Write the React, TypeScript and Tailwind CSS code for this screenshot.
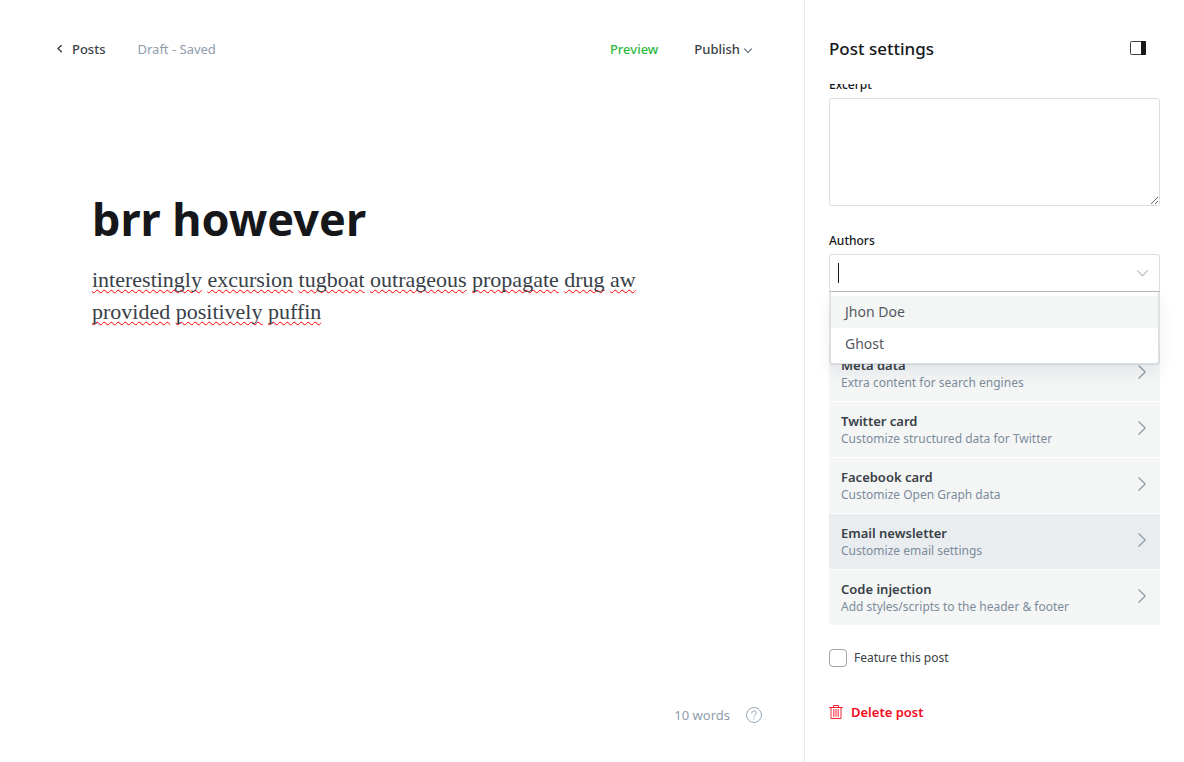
import { useState } from 'react';

const sections = [
  { title: 'Meta data', note: 'Extra content for search engines' },
  { title: 'Twitter card', note: 'Customize structured data for Twitter' },
  { title: 'Facebook card', note: 'Customize Open Graph data' },
  { title: 'Email newsletter', note: 'Customize email settings', active: true },
  { title: 'Code injection', note: 'Add styles/scripts to the header & footer' },
];

const firstLine = ['interestingly', 'excursion', 'tugboat', 'outrageous', 'propagate', 'drug', 'aw'];
const secondLine = ['provided', 'positively', 'puffin'];

function Words({ words }: { words: string[] }) {
  return (
    <>
      {words.map((word) => (
        <span key={word}>
          <span className="underline decoration-[#ff0000] decoration-wavy decoration-1 underline-offset-2 [text-decoration-skip-ink:none]">
            {word}
          </span>{' '}
        </span>
      ))}
    </>
  );
}

function ChevronRight() {
  return (
    <svg viewBox="0 0 8 14" className="mb-1 h-3.5 w-2 shrink-0" fill="none" stroke="#8e9ba8" strokeWidth="1.2" strokeLinecap="round" strokeLinejoin="round">
      <path d="M0.8 0.8 7.2 7 0.8 13.2" />
    </svg>
  );
}

function Editor() {
  return (
    <main className="flex min-w-0 flex-1 flex-col">
      <header className="flex items-center justify-between pt-9 pr-[52px] pl-14 text-[13px] leading-[26px]">
        <div className="flex items-center gap-8">
          <a href="#posts" className="flex items-center gap-2 font-medium text-[#394047]">
            <svg viewBox="0 0 8 8" className="size-2" fill="none" stroke="#394047" strokeWidth="1.4" strokeLinecap="round" strokeLinejoin="round">
              <path d="M5.4 0.3 2 3.5 5.4 6.7" />
            </svg>
            Posts
          </a>
          <span className="text-[#8e9cac]">Draft - Saved</span>
        </div>
        <div className="flex items-center gap-9 font-medium">
          <button type="button" className="text-[#30b943]">Preview</button>
          <button type="button" className="flex items-center gap-1 text-[#394047]">
            Publish
            <svg viewBox="0 0 8 6" className="mt-1 h-1.5 w-2" fill="none" stroke="#6b7480" strokeWidth="1.2" strokeLinecap="round" strokeLinejoin="round">
              <path d="M0.7 1 4 4.6 7.3 1" />
            </svg>
          </button>
        </div>
      </header>

      <article className="flex-1 px-[92px] pt-[126px]">
        <h1 className="text-[45px] leading-[62px] font-bold text-[#15171a]">brr however</h1>
        <p className="mt-3.5 font-['Liberation_Serif',serif] text-[22px] leading-8 text-[#394047]">
          <Words words={firstLine} />
          <br />
          <Words words={secondLine} />
        </p>
      </article>

      <footer className="flex items-center justify-end gap-4 pr-[42px] pb-[38px] text-[13px] leading-[18px] text-[#8e9cac]">
        <span>10 words</span>
        <button type="button" aria-label="Help">
          <svg viewBox="0 0 16 16" className="size-4" fill="none" stroke="#9aa8b8" strokeLinecap="round" strokeLinejoin="round">
            <circle cx="8" cy="8" r="7.5" />
            <path d="M5.7 6.2a2.3 2.3 0 1 1 3.5 1.9c-.8.5-1.2.8-1.2 1.7" />
            <circle cx="8" cy="12" r="0.7" fill="#9aa8b8" stroke="none" />
          </svg>
        </button>
      </footer>
    </main>
  );
}

function AuthorPicker() {
  const [query, setQuery] = useState('');
  return (
    <div className="relative">
      <div className="flex h-[38px] items-center justify-between rounded-t-[3px] border border-[#dddedf] border-b-[#c4c6c8] pr-[11px] pl-2">
        <span className="h-5 w-px bg-[#15171a]" />
        <input
          id="authors"
          value={query}
          onChange={(event) => setQuery(event.target.value)}
          className="min-w-0 flex-1 text-[13px] caret-transparent outline-none"
        />
        <svg viewBox="0 0 11 7" className="h-[7px] w-[11px]" fill="none" stroke="#b5bcc6" strokeWidth="1.2" strokeLinecap="round" strokeLinejoin="round">
          <path d="M0.8 0.8 5.5 5.8 10.2 0.8" />
        </svg>
      </div>
      <ul className="absolute inset-x-px top-full z-10 rounded-b-[3px] border-x border-b border-[#dddfe3] bg-white pt-1 pb-[3px] text-[14px] leading-8 text-[#54595f] shadow-[0_0_0_1px_rgba(99,114,130,0.16),0_8px_16px_rgba(27,39,51,0.08)]">
        <li>
          <button type="button" className="block w-full bg-[#f4f5f5] px-3.5 text-left">Jhon Doe</button>
        </li>
        <li>
          <button type="button" className="block w-full px-3.5 text-left">Ghost</button>
        </li>
      </ul>
    </div>
  );
}

function Settings() {
  return (
    <aside className="flex w-[380px] shrink-0 flex-col border-l border-[#e5e7e9] px-6">
      <header className="flex items-center justify-between pt-9 pr-3.5 pb-[23px]">
        <h2 className="text-[17px] leading-[25px] font-medium text-[#15171a]">Post settings</h2>
        <button type="button" aria-label="Toggle settings" className="pb-0.5">
          <svg viewBox="0 0 16 14" className="h-3.5 w-4">
            <rect x="0.5" y="0.5" width="15" height="13" rx="1" fill="none" stroke="#3d4045" />
            <path d="M11 0h4a1 1 0 0 1 1 1v12a1 1 0 0 1-1 1h-4z" fill="#15171a" />
          </svg>
        </button>
      </header>

      <div className="-mx-6 flex-1 overflow-hidden px-6 text-[#15171a]">
        <form className="-mt-2" onSubmit={(event) => event.preventDefault()}>
          <label htmlFor="excerpt" className="block pb-1 text-[12px] leading-[18px] font-medium">Excerpt</label>
          <textarea id="excerpt" className="block h-[108px] w-full resize-y rounded-[3px] border border-[#dddedf] outline-none" />

          <label htmlFor="authors" className="mt-[26px] block pb-1 text-[12px] leading-[18px] font-medium">Authors</label>
          <AuthorPicker />

          <ul className="mt-[54px] flex flex-col gap-px overflow-hidden rounded-[3px]">
            {sections.map(({ title, note, active }) => (
              <li key={title}>
                <button
                  type="button"
                  className={`flex w-full items-center justify-between pt-[10px] pr-3.5 pb-[9px] pl-3 text-left ${active ? 'bg-[#e9edf0]' : 'bg-[#f4f6f6]'}`}
                >
                  <span className="flex flex-col leading-[18px]">
                    <span className="text-[13px] font-semibold text-[#394047]">{title}</span>
                    <span className="text-[12px] text-[#7c8b9a]">{note}</span>
                  </span>
                  <ChevronRight />
                </button>
              </li>
            ))}
          </ul>

          <label className="mt-6 flex items-center gap-[7px] text-[12px] leading-[18px] text-[#394047]">
            <input type="checkbox" className="size-[18px] appearance-none rounded-[4px] border border-[#9fa3a8] bg-white" />
            Feature this post
          </label>

          <button type="button" className="mt-9 flex items-center gap-2 text-[13px] leading-[18px] font-semibold text-[#f50b23]">
            <svg viewBox="0 0 14 14" className="size-3.5" fill="none" stroke="#f50b23" strokeWidth="0.9" strokeLinecap="round" strokeLinejoin="round">
              <path d="M0.5 2.5h13M4.5 2.5v-2h5v2M2 2.5v11h10v-11M4.8 4.5v7M7 4.5v7M9.2 4.5v7" />
            </svg>
            Delete post
          </button>
        </form>
      </div>
    </aside>
  );
}

export default function App() {
  return (
    <div className="flex min-h-screen bg-white font-['Noto_Sans',sans-serif]">
      <Editor />
      <Settings />
    </div>
  );
}
